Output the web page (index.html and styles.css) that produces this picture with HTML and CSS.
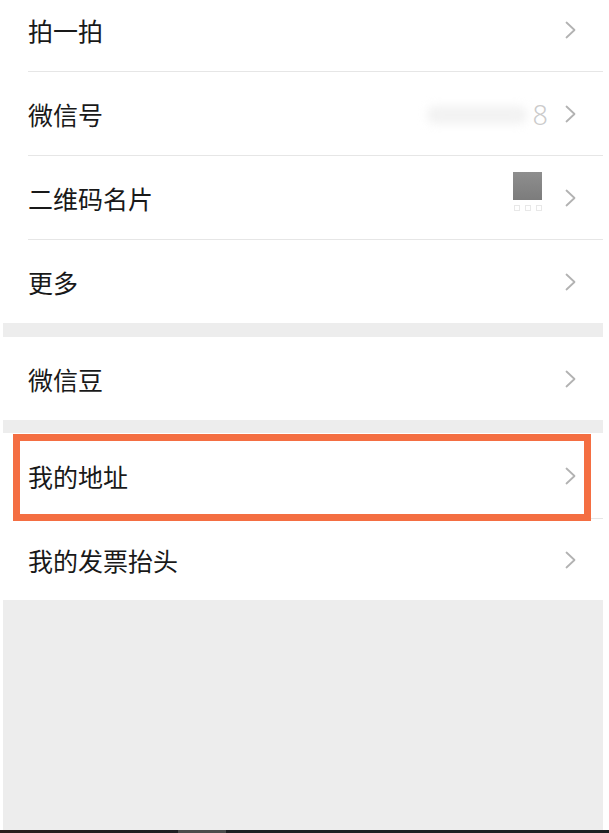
FILE: index.html
```html
<!DOCTYPE html>
<html lang="zh-CN">
<head>
<meta charset="utf-8">
<title>设置</title>
<link rel="stylesheet" href="styles.css">
</head>
<body>
<div class="screen">
  <div class="group first">
    <div class="row h84">
      <div class="row-inner line">
        <span class="label">拍一拍</span>
        <svg class="chev" viewBox="0 0 11 18" width="11" height="18"><polyline points="1.5,1.5 9.5,9 1.5,16.5"/></svg>
      </div>
    </div>
    <div class="row h84">
      <div class="row-inner line">
        <span class="label">微信号</span>
        <span class="value wxid"><span class="blur"></span><span class="digit">8</span></span>
        <svg class="chev" viewBox="0 0 11 18" width="11" height="18"><polyline points="1.5,1.5 9.5,9 1.5,16.5"/></svg>
      </div>
    </div>
    <div class="row h84">
      <div class="row-inner line">
        <span class="label">二维码名片</span>
        <span class="value qr"><span class="qr-square"></span><span class="qr-dots"><i></i><i></i><i></i></span></span>
        <svg class="chev" viewBox="0 0 11 18" width="11" height="18"><polyline points="1.5,1.5 9.5,9 1.5,16.5"/></svg>
      </div>
    </div>
    <div class="row h83">
      <div class="row-inner">
        <span class="label">更多</span>
        <svg class="chev" viewBox="0 0 11 18" width="11" height="18"><polyline points="1.5,1.5 9.5,9 1.5,16.5"/></svg>
      </div>
    </div>
  </div>
  <div class="gap g14"></div>
  <div class="group">
    <div class="row h83">
      <div class="row-inner">
        <span class="label">微信豆</span>
        <svg class="chev" viewBox="0 0 11 18" width="11" height="18"><polyline points="1.5,1.5 9.5,9 1.5,16.5"/></svg>
      </div>
    </div>
  </div>
  <div class="gap g13"></div>
  <div class="group">
    <div class="row h86 highlighted">
      <div class="row-inner line">
        <span class="label">我的地址</span>
        <svg class="chev" viewBox="0 0 11 18" width="11" height="18"><polyline points="1.5,1.5 9.5,9 1.5,16.5"/></svg>
      </div>
      <div class="mark"></div>
    </div>
    <div class="row h81">
      <div class="row-inner">
        <span class="label">我的发票抬头</span>
        <svg class="chev" viewBox="0 0 11 18" width="11" height="18"><polyline points="1.5,1.5 9.5,9 1.5,16.5"/></svg>
      </div>
    </div>
  </div>
  <div class="filler"></div>
</div>
<div class="strip"></div>
</body>
</html>
```
FILE: styles.css
```css
html, body {
  margin: 0;
  padding: 0;
  background: #ffffff;
  height: 833px;
  overflow: hidden;
}
body {
  font-family: "Noto Sans CJK SC", "Noto Sans", sans-serif;
  color: #191919;
}
.screen {
  width: 600px;
  margin-left: 3px;
  margin-top: -12px;
}
.group {
  background: #ffffff;
  display: flex;
  flex-direction: column;
}
.row {
  position: relative;
  display: flex;
  padding-left: 25px;
  box-sizing: border-box;
}
.h84 { height: 84px; }
.h83 { height: 83px; }
.h86 { height: 86px; }
.h81 { height: 81px; }
.row-inner {
  flex: 1;
  display: flex;
  align-items: center;
  padding-right: 27px;
  box-sizing: border-box;
}
.row-inner.line {
  border-bottom: 1px solid #e6e6e6;
}
.label {
  font-size: 25px;
  line-height: 1;
  flex: 1;
  padding-top: 2px;
}
.chev {
  flex: none;
  fill: none;
  stroke: #b2b2b2;
  stroke-width: 1.8;
  stroke-linecap: round;
  stroke-linejoin: round;
}
.value {
  display: flex;
  align-items: center;
}
.wxid {
  margin-right: 17px;
  padding-top: 2px;
}
.blur {
  display: block;
  width: 100px;
  height: 18px;
  margin-right: 6px;
  background: #f2f2f2;
  border-radius: 8px;
  filter: blur(5px);
}
.digit {
  font-family: "Noto Sans", "Open Sans", sans-serif;
  font-weight: 300;
  font-size: 27px;
  line-height: 1;
  color: #cbcbcb;
}
.qr {
  flex-direction: column;
  align-items: center;
  margin-right: 23px;
  padding-bottom: 14px;
}
.qr-square {
  display: block;
  width: 29px;
  height: 28px;
  background: linear-gradient(180deg, #8e8e8e 0%, #7c7c7c 100%);
}
.qr-dots {
  display: flex;
  gap: 5px;
  margin-top: 5px;
  height: 5px;
}
.qr-dots i {
  display: block;
  width: 4px;
  height: 4px;
  border: 1px solid #e8e8e8;
}
.gap { background: #ededed; }
.g14 { height: 14px; }
.g13 { height: 13px; }
.mark {
  position: absolute;
  left: 10px;
  top: 1px;
  width: 578px;
  height: 87px;
  border: 7px solid #f46e42;
  box-sizing: border-box;
  pointer-events: none;
}
.filler {
  height: 230px;
  background: #ededed;
}
.strip {
  height: 3px;
  background: linear-gradient(90deg, #2a1d1c 0px, #1f1d1f 120px, #1e1f22 178px, #4b4b4b 178px, #4b4b4b 226px, #1d1e21 226px, #1d1e21 100%);
}
```
